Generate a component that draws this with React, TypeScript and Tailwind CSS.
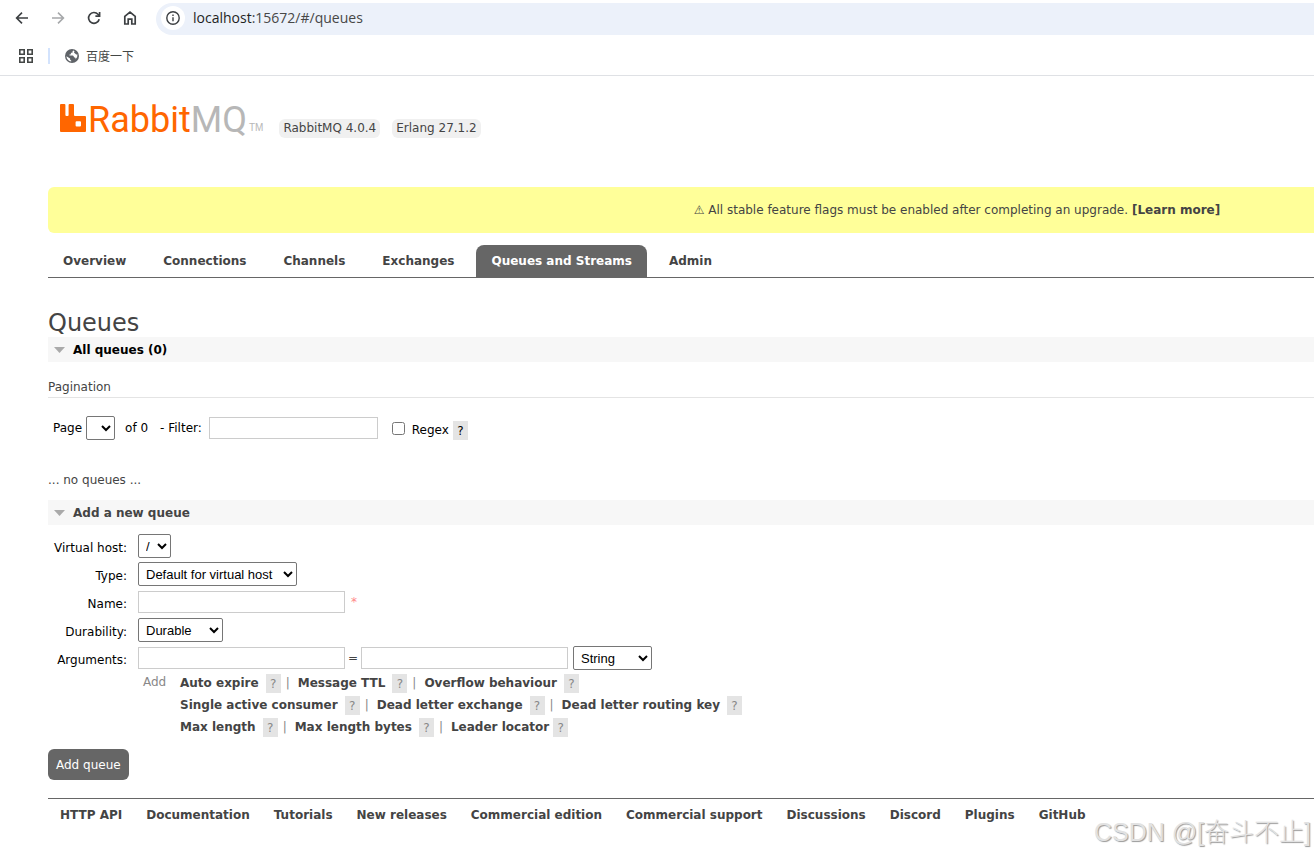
import type { ReactNode } from 'react';

const tabs = ['Overview', 'Connections', 'Channels', 'Exchanges', 'Queues and Streams', 'Admin'];

const argumentRows = [
    ['Auto expire', 'Message TTL', 'Overflow behaviour'],
    ['Single active consumer', 'Dead letter exchange', 'Dead letter routing key'],
    ['Max length', 'Max length bytes', 'Leader locator'],
];

const footerLinks = [
    'HTTP API',
    'Documentation',
    'Tutorials',
    'New releases',
    'Commercial edition',
    'Commercial support',
    'Discussions',
    'Discord',
    'Plugins',
    'GitHub',
];

const selectClass = 'h-6 rounded-xs border border-[#767676] bg-white px-[3px] font-["Liberation_Sans",sans-serif] text-[13px] text-black';
const inputClass = 'h-[22px] border border-[#ccc] bg-white px-1 text-black';

function BrowserBar() {
    return (
        <header className="border-b border-[#dfe1e5] text-[#444746]">
            <div className="flex h-9 items-center pl-3">
                <div className="flex items-center gap-4">
                    <button type="button" aria-label="Back" className="flex size-5 items-center justify-center">
                        <svg viewBox="0 0 16 16" className="size-4" fill="none" stroke="#3c3f42" strokeWidth="1.6">
                            <path d="M14 8H3M8 2.6 2.6 8 8 13.4" />
                        </svg>
                    </button>
                    <button type="button" aria-label="Forward" className="flex size-5 items-center justify-center">
                        <svg viewBox="0 0 16 16" className="size-4" fill="none" stroke="#a6a8aa" strokeWidth="1.6">
                            <path d="M2 8h11M8 2.6 13.4 8 8 13.4" />
                        </svg>
                    </button>
                    <button type="button" aria-label="Reload" className="flex size-5 items-center justify-center">
                        <svg viewBox="0 0 16 16" className="size-4" fill="none" stroke="#3c3f42" strokeWidth="1.7">
                            <path d="M13.2 9.2A5.4 5.4 0 1 1 12 4.3l1.4 1.5" />
                            <path d="M13.6 2v4.2H9.4" />
                        </svg>
                    </button>
                    <button type="button" aria-label="Home" className="flex size-5 items-center justify-center">
                        <svg viewBox="0 0 16 16" className="size-4" fill="none" stroke="#3c3f42" strokeWidth="1.7">
                            <path d="M2.8 14V6.4L8 2.2l5.2 4.2V14H9.8V9.2H6.2V14z" />
                        </svg>
                    </button>
                </div>
                <div className="ml-4 mt-[2px] flex h-8 flex-1 items-center gap-2 rounded-l-full bg-[#ecf1fa] pb-[2px] pl-[5px]">
                    <span className="flex size-6 items-center justify-center rounded-full bg-white">
                        <svg viewBox="0 0 16 16" className="size-4" fill="none" stroke="#3c3f42" strokeWidth="1.4">
                            <circle cx="8" cy="8" r="6.2" />
                            <path d="M8 7.2v4M8 4.6v1.5" />
                        </svg>
                    </span>
                    <span className="font-['Open_Sans',sans-serif] text-sm leading-5 text-[#474747]">
                        <span className="text-[#1f1f1f]">localhost</span>:15672/#/queues
                    </span>
                </div>
            </div>
            <div className="flex h-[39px] items-center pl-[18px]">
                <svg viewBox="0 0 16 16" className="size-4" fill="none" stroke="#444746" strokeWidth="1.6">
                    <path d="M1.8 1.8h4.4v4.4H1.8zM9.8 1.8h4.4v4.4H9.8zM1.8 9.8h4.4v4.4H1.8zM9.8 9.8h4.4v4.4H9.8z" />
                </svg>
                <span className="ml-[14px] h-4 w-[2px] bg-[#d3e3fd]" />
                <a href="#baidu" className="ml-[14px] flex items-center gap-[6px] font-['Noto_Sans_CJK_SC',sans-serif] text-xs leading-4">
                    <svg viewBox="0 0 16 16" className="size-4">
                        <circle cx="8" cy="8" r="7" fill="#5f6368" />
                        <path
                            fill="#fff"
                            d="M9.6 2.6c-.9.2-1.2.6-1 1.2.1.6-.2 1-1 1-.7 0-.8.5-.7 1 .1.6-.3.9-1 .8-.5 0-.6.4-.3.8h3c.9.1 1.2.7 1.2 1.4 0 .6.5.7 1.1.7.6.1.8.6.7 1.2l-.2.9a5.6 5.6 0 0 0 2-5.3c-.7.5-1.3.3-1.7-.3-.3-.5-.9-.5-1.3-.9-.5-.5-.3-1.2.2-1.6zM2.4 8.2c.2 2.7 2.1 4.9 4.8 5.3v-1.1c-.7-.1-1.1-.5-1.1-1.2v-.7z"
                        />
                    </svg>
                    百度一下
                </a>
            </div>
        </header>
    );
}

function Logo() {
    return (
        <a href="#/" className="flex items-end text-[#f60]">
            <svg viewBox="0 0 26 28" className="mb-[6px] h-7 w-[26px]" fill="#f60">
                <path
                    fillRule="evenodd"
                    d="M1 0h3.4a1 1 0 0 1 1 1v10a1 1 0 0 0 1 1h1.2a1 1 0 0 0 1-1V1a1 1 0 0 1 1-1H13a1 1 0 0 1 1 1v10a1 1 0 0 0 1 1h10a1 1 0 0 1 1 1v14a1 1 0 0 1-1 1H1a1 1 0 0 1-1-1V1a1 1 0 0 1 1-1zM16.6 17.2a1 1 0 0 0-1 1v3.4a1 1 0 0 0 1 1H20a1 1 0 0 0 1-1v-3.4a1 1 0 0 0-1-1z"
                />
            </svg>
            <span className="ml-[2px] font-['Roboto',sans-serif] text-4xl leading-9">
                Rabbit<span className="text-[#b7b7b7]">MQ</span>
            </span>
            <span className="mb-1 ml-[2px] font-['Liberation_Sans',sans-serif] text-[10px] leading-3 text-[#b7b7b7]">TM</span>
        </a>
    );
}

function SectionHeading({ children, active }: { children: ReactNode; active?: boolean }) {
    return (
        <h2 className={active ? 'bg-[#f7f7f7] font-bold text-black' : 'bg-[#f7f7f7] font-bold text-[#444]'}>
            <button type="button" className="flex h-[25px] w-full items-center gap-2 pl-[6px]">
                <svg viewBox="0 0 11 6" className="h-[6px] w-[11px]" fill="#aaa">
                    <path d="M0 0h11L5.5 6z" />
                </svg>
                {children}
            </button>
        </h2>
    );
}

function Help({ dark }: { dark?: boolean }) {
    return (
        <button
            type="button"
            aria-label="Help"
            className={dark ? 'h-[19px] w-[15px] bg-[#e4e4e4] text-black' : 'h-[19px] w-[15px] bg-[#e4e4e4] text-[#888]'}
        >
            ?
        </button>
    );
}

function Field({ id, label, children }: { id: string; label: string; children: ReactNode }) {
    return (
        <div className="flex h-7 items-center">
            <label htmlFor={id} className="w-[79px] pt-1 text-right text-black">
                {label}
            </label>
            <div className="ml-[11px] flex items-center">{children}</div>
        </div>
    );
}

export default function App() {
    return (
        <div className="relative min-h-screen overflow-hidden bg-white font-['DejaVu_Sans',sans-serif] text-xs leading-5 whitespace-nowrap text-[#444]">
            <BrowserBar />

            <main className="pl-12">
                {/* Logo and versions */}
                <div className="flex items-end pt-[26px] pl-3">
                    <Logo />
                    <span className="ml-4 rounded-md bg-[#f0f0f0] px-1 leading-[19px]">RabbitMQ 4.0.4</span>
                    <span className="ml-3 rounded-md bg-[#f0f0f0] px-1 leading-[19px]">Erlang 27.1.2</span>
                </div>

                {/* Feature flag warning */}
                <div className="mt-[49px] rounded-l-md bg-[#ff9] py-[13px] pl-[51%]">
                    ⚠ All stable feature flags must be enabled after completing an upgrade.{' '}
                    <a href="#learn" className="font-bold">[Learn more]</a>
                </div>

                <nav className="mt-3 flex gap-[7px] border-b border-[#666]">
                    {tabs.map((tab) => (
                        <a
                            key={tab}
                            href={`#${tab}`}
                            className={
                                tab === 'Queues and Streams'
                                    ? 'rounded-t-lg bg-[#666] px-[15px] py-[6px] font-bold text-white'
                                    : 'px-[15px] py-[6px] font-bold'
                            }
                        >
                            {tab}
                        </a>
                    ))}
                </nav>

                <h1 className="mt-[31px] text-2xl leading-7">Queues</h1>
                <SectionHeading active>All queues (0)</SectionHeading>

                <h3 className="mt-4 border-b border-[#e4e4e4] leading-[19px]">Pagination</h3>
                <div className="mt-4 flex h-7 items-center pl-[5px] text-black">
                    <label htmlFor="page">Page</label>
                    <select id="page" className={`${selectClass} ml-1 w-[29px]`} />
                    <span className="ml-[10px]">of 0</span>
                    <label htmlFor="filter" className="ml-3">- Filter:</label>
                    <input id="filter" type="text" className={`${inputClass} ml-[7px] w-[169px]`} />
                    <input id="regex" type="checkbox" className="ml-[14px] size-[13px]" />
                    <div className="ml-[7px] flex items-center gap-1 pt-1">
                        <label htmlFor="regex">Regex</label>
                        <Help dark />
                    </div>
                </div>

                <p className="mt-7">... no queues ...</p>
                <div className="mt-[10px]">
                    <SectionHeading>Add a new queue</SectionHeading>
                </div>

                <form className="mt-[7px]">
                    <Field id="vhost" label="Virtual host:">
                        <select id="vhost" className={`${selectClass} w-[33px]`}>
                            <option>/</option>
                        </select>
                    </Field>
                    <Field id="type" label="Type:">
                        <select id="type" className={`${selectClass} w-[159px]`}>
                            <option>Default for virtual host</option>
                        </select>
                    </Field>
                    <Field id="name" label="Name:">
                        <input id="name" type="text" className={`${inputClass} w-[207px]`} />
                        <span className="ml-[6px] text-[#f88]">*</span>
                    </Field>
                    <Field id="durability" label="Durability:">
                        <select id="durability" className={`${selectClass} w-[85px]`}>
                            <option>Durable</option>
                        </select>
                    </Field>
                    <Field id="arguments" label="Arguments:">
                        <input id="arguments" type="text" className={`${inputClass} w-[207px]`} />
                        <span className="w-4 text-center">=</span>
                        <input type="text" aria-label="Argument value" className={`${inputClass} w-[207px]`} />
                        <select aria-label="Argument type" className={`${selectClass} ml-[5px] w-[79px]`}>
                            <option>String</option>
                        </select>
                    </Field>

                    <div className="flex pl-[95px] text-[#888]">
                        <span className="w-[37px]">Add</span>
                        <div>
                            {argumentRows.map((row) => (
                                <div key={row[0]} className="flex h-[22px] items-center">
                                    {row.map((name, i) => (
                                        <span key={name} className="flex items-center">
                                            {i > 0 && <span className="mr-2 ml-[5px]">|</span>}
                                            <button
                                                type="button"
                                                className={
                                                    name === 'Leader locator'
                                                        ? 'mr-1 font-bold text-[#444]'
                                                        : 'mr-[7px] font-bold text-[#444]'
                                                }
                                            >
                                                {name}
                                            </button>
                                            <Help />
                                        </span>
                                    ))}
                                </div>
                            ))}
                        </div>
                    </div>

                    <button type="button" className="mt-[11px] h-[31px] rounded-md bg-[#666] px-2 text-white">
                        Add queue
                    </button>
                </form>

                <footer className="mt-[18px] flex gap-6 border-t border-[#666] pt-[6px] pl-3 font-bold">
                    {footerLinks.map((link) => (
                        <a key={link} href={`#${link}`}>{link}</a>
                    ))}
                </footer>
            </main>

            {/* Watermark over the page corner */}
            <div className="absolute right-[3px] bottom-1 font-['Liberation_Sans','Noto_Sans_CJK_SC',sans-serif] text-[25px] leading-9 font-light text-[#e2e2e2] [text-shadow:1px_1px_1px_#999]">
                CSDN @[奋斗不止]
            </div>
        </div>
    );
}
